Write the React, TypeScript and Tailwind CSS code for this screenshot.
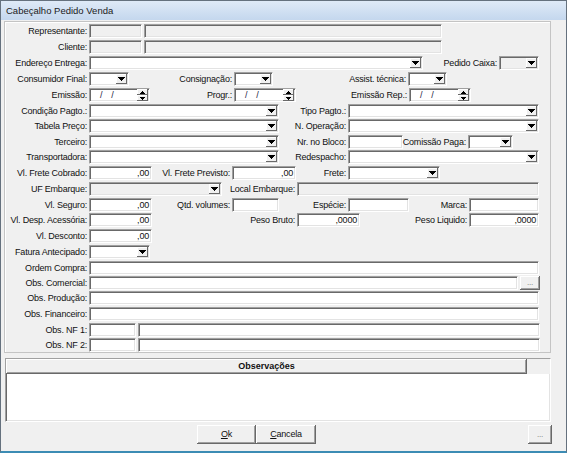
import React from 'react';

type Item =
  | { k: 'L'; w: string; t?: string }
  | { k: 'E'; w: string; v?: string; d?: boolean }
  | { k: 'C'; w: string; d?: boolean }
  | { k: 'D'; w: string }
  | { k: 'B'; w: string };

const sunk =
  'border border-t-[#a0a0a0] border-l-[#a0a0a0] border-r-white border-b-white shadow-[inset_1px_1px_0_#696969,inset_-1px_-1px_0_#e3e3e3]';
const raised =
  'bg-[#f0f0f0] shadow-[inset_-1px_-1px_0_#696969,inset_1px_1px_0_#ffffff,inset_-2px_-2px_0_#a0a0a0]';
const raisedSmall = 'bg-[#f0f0f0] shadow-[inset_-1px_-1px_0_#696969,inset_1px_1px_0_#ffffff]';

function Arrow() {
  return (
    <div className={`h-[10px] w-[11px] flex items-center justify-center ${raisedSmall}`}>
      <svg width="7" height="4" viewBox="0 0 7 4" shapeRendering="crispEdges">
        <path d="M0 0h7v1H0zM1 1h5v1H1zM2 2h3v1H2zM3 3h1v1H3z" fill="#000" />
      </svg>
    </div>
  );
}

function Spin({ up }: { up?: boolean }) {
  return (
    <div className={`h-[6px] w-[11px] flex items-center justify-center ${raisedSmall}`}>
      <svg width="5" height="3" viewBox="0 0 5 3" shapeRendering="crispEdges">
        {up ? (
          <path d="M2 0h1v1H2zM1 1h3v1H1zM0 2h5v1H0z" fill="#000" />
        ) : (
          <path d="M0 0h5v1H0zM1 1h3v1H1zM2 2h1v1H2z" fill="#000" />
        )}
      </svg>
    </div>
  );
}

function Cell({ it }: { it: Item }) {
  if (it.k === 'L')
    return (
      <div className={`${it.w} h-[14px] shrink-0 flex items-center justify-end pr-[2px] whitespace-nowrap`}>
        {it.t}
      </div>
    );
  if (it.k === 'E')
    return (
      <div
        className={`${it.w} h-[14px] shrink-0 ${sunk} ${it.d ? 'bg-[#f0f0f0]' : 'bg-white'} flex items-center justify-end pr-[2px]`}
      >
        {it.v}
      </div>
    );
  if (it.k === 'C')
    return (
      <div
        className={`${it.w} h-[14px] shrink-0 ${sunk} ${it.d ? 'bg-[#f0f0f0]' : 'bg-white'} flex items-center justify-end pr-[1px]`}
      >
        <Arrow />
      </div>
    );
  if (it.k === 'D')
    return (
      <div className={`${it.w} h-[14px] shrink-0 ${sunk} bg-white flex items-center`}>
        <span className="ml-[10px] text-[#1a1a40]">/</span>
        <span className="ml-[9px] text-[#1a1a40]">/</span>
        <div className="ml-auto mr-[1px] flex flex-col">
          <Spin up />
          <Spin />
        </div>
      </div>
    );
  return (
    <div className={`${it.w} h-[14px] shrink-0 ${raised} flex items-center justify-center text-[#707070] text-[8px]`}>
      ...
    </div>
  );
}

const L = (w: string, t?: string): Item => ({ k: 'L', w, t });
const E = (w: string, v?: string, d?: boolean): Item => ({ k: 'E', w, v, d });
const C = (w: string, d?: boolean): Item => ({ k: 'C', w, d });
const D = (w: string): Item => ({ k: 'D', w });
const B = (w: string): Item => ({ k: 'B', w });

const rows: { h: string; items: Item[] }[] = [
  { h: 'h-[16px]', items: [L('w-[84px]', 'Representante:'), E('w-[53px]', '', true), L('w-[2px]'), E('w-[298px]', '', true)] },
  { h: 'h-[16px]', items: [L('w-[84px]', 'Cliente:'), E('w-[53px]', '', true), L('w-[2px]'), E('w-[298px]', '', true)] },
  { h: 'h-[16px]', items: [L('w-[84px]', 'Endereço Entrega:'), C('w-[334px]'), L('w-[76px]', 'Pedido Caixa:'), C('w-[40px]', true)] },
  {
    h: 'h-[16px]',
    items: [
      L('w-[84px]', 'Consumidor Final:'),
      C('w-[40px]'),
      L('w-[105px]', 'Consignação:'),
      C('w-[39px]'),
      L('w-[135px]', 'Assist. técnica:'),
      C('w-[39px]'),
    ],
  },
  {
    h: 'h-[16px]',
    items: [
      L('w-[84px]', 'Emissão:'),
      D('w-[61px]'),
      L('w-[84px]', 'Progr.:'),
      D('w-[62px]'),
      L('w-[113px]', 'Emissão Rep.:'),
      D('w-[62px]'),
    ],
  },
  { h: 'h-[15px]', items: [L('w-[84px]', 'Condição Pagto.:'), C('w-[190px]'), L('w-[69px]', 'Tipo Pagto.:'), C('w-[191px]')] },
  { h: 'h-[16px]', items: [L('w-[84px]', 'Tabela Preço:'), C('w-[190px]'), L('w-[69px]', 'N. Operação:'), C('w-[191px]')] },
  {
    h: 'h-[15px]',
    items: [
      L('w-[84px]', 'Terceiro:'),
      C('w-[190px]'),
      L('w-[69px]', 'Nr. no Bloco:'),
      E('w-[55px]'),
      L('w-[65px]', 'Comissão Paga:'),
      C('w-[45px]'),
    ],
  },
  { h: 'h-[16px]', items: [L('w-[84px]', 'Transportadora:'), C('w-[190px]'), L('w-[69px]', 'Redespacho:'), C('w-[191px]')] },
  {
    h: 'h-[16px]',
    items: [
      L('w-[84px]', 'Vl. Frete Cobrado:'),
      E('w-[63px]', ',00'),
      L('w-[80px]', 'Vl. Frete Previsto:'),
      E('w-[64px]', ',00'),
      L('w-[52px]', 'Frete:'),
      C('w-[92px]'),
    ],
  },
  { h: 'h-[16px]', items: [L('w-[84px]', 'UF Embarque:'), C('w-[133px]', true), L('w-[75px]', 'Local Embarque:'), E('w-[242px]', '', true)] },
  {
    h: 'h-[15px]',
    items: [
      L('w-[84px]', 'Vl. Seguro:'),
      E('w-[63px]', ',00'),
      L('w-[80px]', 'Qtd. volumes:'),
      E('w-[47px]'),
      L('w-[69px]', 'Espécie:'),
      E('w-[61px]'),
      L('w-[60px]', 'Marca:'),
      E('w-[70px]'),
    ],
  },
  {
    h: 'h-[16px]',
    items: [
      L('w-[84px]', 'Vl. Desp. Acessória:'),
      E('w-[63px]', ',00'),
      L('w-[145px]', 'Peso Bruto:'),
      E('w-[63px]', ',0000'),
      L('w-[109px]', 'Peso Liquido:'),
      E('w-[70px]', ',0000'),
    ],
  },
  { h: 'h-[16px]', items: [L('w-[84px]', 'Vl. Desconto:'), E('w-[63px]', ',00')] },
  { h: 'h-[16px]', items: [L('w-[84px]', 'Fatura Antecipado:'), C('w-[61px]')] },
  { h: 'h-[15px]', items: [L('w-[84px]', 'Ordem Compra:'), E('w-[450px]')] },
  { h: 'h-[15px]', items: [L('w-[84px]', 'Obs. Comercial:'), E('w-[429px]'), L('w-[1px]'), B('w-[20px]')] },
  { h: 'h-[16px]', items: [L('w-[84px]', 'Obs. Produção:'), E('w-[450px]')] },
  { h: 'h-[16px]', items: [L('w-[84px]', 'Obs. Financeiro:'), E('w-[450px]')] },
  { h: 'h-[15px]', items: [L('w-[84px]', 'Obs. NF 1:'), E('w-[47px]'), L('w-[1px]'), E('w-[402px]')] },
  { h: 'h-[14px]', items: [L('w-[84px]', 'Obs. NF 2:'), E('w-[47px]'), L('w-[1px]'), E('w-[402px]')] },
];

export default function App() {
  return (
    <div className="w-[567px] h-[453px] flex flex-col bg-[#f0f0f0] border-x border-t border-[#65717e] border-b-2 border-b-[#3c8cb4] overflow-hidden font-['Liberation_Sans',Arial,sans-serif] text-[9px] tracking-[-0.2px] text-[#111] leading-none">
      <div className="h-[19px] shrink-0 bg-linear-to-b from-[#dfeaf7] to-[#c4d7ee] flex items-center pl-[5px] text-[9.5px] tracking-normal text-[#1b1b1b]">
        Cabeçalho Pedido Venda
      </div>
      <div className="ml-[3px] mt-[1px] w-[547px] shrink-0 border border-[#c4c4c4] shadow-[inset_1px_1px_0_#ffffff] pt-[2px] flex flex-col">
        {rows.map((r, i) => (
          <div key={i} className={`${r.h} flex items-start`}>
            {r.items.map((it, j) => (
              <Cell key={j} it={it} />
            ))}
          </div>
        ))}
      </div>
      <div className={`ml-[4px] mt-[5px] w-[546px] h-[64px] shrink-0 ${sunk} bg-white flex flex-col`}>
        <div className="h-[15px] flex bg-[#f0f0f0]">
          <div className={`w-[521px] h-full ${raised} flex items-center justify-center font-bold tracking-normal`}>
            Observações
          </div>
          <div className="flex-1" />
        </div>
      </div>
      <div className="mt-[3px] h-[19px] shrink-0 flex">
        <div className={`ml-[196px] w-[59px] h-full ${raised} flex items-center justify-center`}>
          <span>
            <span className="underline">O</span>k
          </span>
        </div>
        <div className={`w-[60px] h-full ${raised} flex items-center justify-center`}>
          <span>
            <span className="underline">C</span>ancela
          </span>
        </div>
        <div className={`ml-[212px] w-[24px] h-full ${raised} flex items-center justify-center text-[#707070] text-[8px]`}>
          ...
        </div>
      </div>
    </div>
  );
}
